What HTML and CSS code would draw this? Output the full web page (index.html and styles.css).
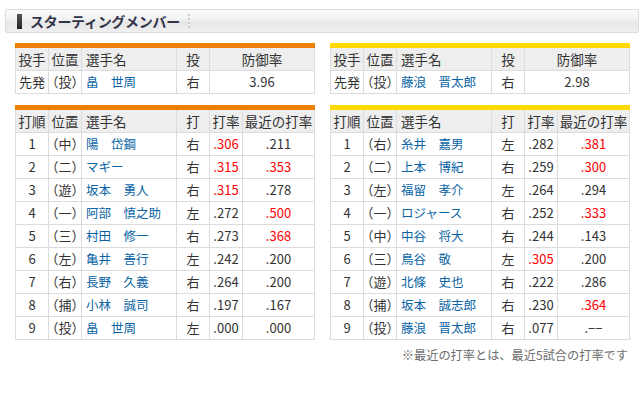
FILE: index.html
```html
<!DOCTYPE html>
<html lang="ja">
<head>
<meta charset="utf-8">
<link rel="stylesheet" href="styles.css">
</head>
<body>
<div class="titlebar"><span class="mark"></span><h2 class="title">スターティングメンバー</h2><span class="sep"></span></div>
<div class="cols">
  <div class="col">
    <table class="tbl orange pitch">
      <colgroup><col class="c1"><col class="c2"><col class="c3"><col class="c4"><col></colgroup>
      <tr class="head"><th>投手</th><th>位置</th><th class="l">選手名</th><th>投</th><th>防御率</th></tr>
      <tr><td>先発</td><td class="pos">（投）</td><td class="l"><a>畠　世周</a></td><td>右</td><td>3.96</td></tr>
    </table>
    <table class="tbl orange bat">
      <colgroup><col class="c1"><col class="c2"><col class="c3"><col class="c4"><col class="c5"><col></colgroup>
      <tr class="head"><th>打順</th><th>位置</th><th class="l">選手名</th><th>打</th><th>打率</th><th>最近の打率</th></tr>
      <tr><td>1</td><td class="pos">（中）</td><td class="l"><a>陽　岱鋼</a></td><td>右</td><td class="red">.306</td><td>.211</td></tr>
      <tr><td>2</td><td class="pos">（二）</td><td class="l"><a>マギー</a></td><td>右</td><td class="red">.315</td><td class="red">.353</td></tr>
      <tr><td>3</td><td class="pos">（遊）</td><td class="l"><a>坂本　勇人</a></td><td>右</td><td class="red">.315</td><td>.278</td></tr>
      <tr><td>4</td><td class="pos">（一）</td><td class="l"><a>阿部　慎之助</a></td><td>左</td><td>.272</td><td class="red">.500</td></tr>
      <tr><td>5</td><td class="pos">（三）</td><td class="l"><a>村田　修一</a></td><td>右</td><td>.273</td><td class="red">.368</td></tr>
      <tr><td>6</td><td class="pos">（左）</td><td class="l"><a>亀井　善行</a></td><td>左</td><td>.242</td><td>.200</td></tr>
      <tr><td>7</td><td class="pos">（右）</td><td class="l"><a>長野　久義</a></td><td>右</td><td>.264</td><td>.200</td></tr>
      <tr><td>8</td><td class="pos">（捕）</td><td class="l"><a>小林　誠司</a></td><td>右</td><td>.197</td><td>.167</td></tr>
      <tr><td>9</td><td class="pos">（投）</td><td class="l"><a>畠　世周</a></td><td>左</td><td>.000</td><td>.000</td></tr>
    </table>
  </div>
  <div class="col">
    <table class="tbl yellow pitch">
      <colgroup><col class="c1"><col class="c2"><col class="c3"><col class="c4"><col></colgroup>
      <tr class="head"><th>投手</th><th>位置</th><th class="l">選手名</th><th>投</th><th>防御率</th></tr>
      <tr><td>先発</td><td class="pos">（投）</td><td class="l"><a>藤浪　晋太郎</a></td><td>右</td><td>2.98</td></tr>
    </table>
    <table class="tbl yellow bat">
      <colgroup><col class="c1"><col class="c2"><col class="c3"><col class="c4"><col class="c5"><col></colgroup>
      <tr class="head"><th>打順</th><th>位置</th><th class="l">選手名</th><th>打</th><th>打率</th><th>最近の打率</th></tr>
      <tr><td>1</td><td class="pos">（右）</td><td class="l"><a>糸井　嘉男</a></td><td>左</td><td>.282</td><td class="red">.381</td></tr>
      <tr><td>2</td><td class="pos">（二）</td><td class="l"><a>上本　博紀</a></td><td>右</td><td>.259</td><td class="red">.300</td></tr>
      <tr><td>3</td><td class="pos">（左）</td><td class="l"><a>福留　孝介</a></td><td>左</td><td>.264</td><td>.294</td></tr>
      <tr><td>4</td><td class="pos">（一）</td><td class="l"><a>ロジャース</a></td><td>右</td><td>.252</td><td class="red">.333</td></tr>
      <tr><td>5</td><td class="pos">（中）</td><td class="l"><a>中谷　将大</a></td><td>右</td><td>.244</td><td>.143</td></tr>
      <tr><td>6</td><td class="pos">（三）</td><td class="l"><a>鳥谷　敬</a></td><td>左</td><td class="red">.305</td><td>.200</td></tr>
      <tr><td>7</td><td class="pos">（遊）</td><td class="l"><a>北條　史也</a></td><td>右</td><td>.222</td><td>.286</td></tr>
      <tr><td>8</td><td class="pos">（捕）</td><td class="l"><a>坂本　誠志郎</a></td><td>右</td><td>.230</td><td class="red">.364</td></tr>
      <tr><td>9</td><td class="pos">（投）</td><td class="l"><a>藤浪　晋太郎</a></td><td>右</td><td>.077</td><td>.−−</td></tr>
    </table>
    <p class="note">※最近の打率とは、最近5試合の打率です</p>
  </div>
</div>
</body>
</html>
```
FILE: styles.css
```css
html, body { margin: 0; padding: 0; background: #fff; }
body {
  font-family: "Noto Sans CJK JP", "Noto Sans", sans-serif;
  font-size: 13px;
  color: #333;
  padding: 9px 4px 0 5px;
}
.titlebar {
  display: flex;
  align-items: center;
  height: 22px;
  border: 1px solid #dcdcdc;
  border-radius: 2px;
  background: linear-gradient(#fbfbfb 0%, #f1f1f1 45%, #e6e6e6 55%, #efefef 100%);
  padding-left: 11px;
}
.mark { width: 5px; height: 15px; background: linear-gradient(#555, #222); margin-right: 8px; }
.title { margin: 0; font-size: 14px; font-weight: bold; color: #33334a; line-height: 22px; letter-spacing: -0.3px; }
.sep { width: 0; height: 14px; border-left: 2px dotted #ccc; margin-left: 8px; }
.cols { display: flex; gap: 15px; padding: 10px 0 0 10px; }
.col { width: 300px; }
.tbl {
  width: 300px;
  border-collapse: collapse;
  table-layout: fixed;
  margin-bottom: 11px;
}
.tbl.orange { border-top: 5px solid #ee7f00; }
.tbl.yellow { border-top: 5px solid #ffd900; }
.tbl.bat { margin-bottom: 0; }
.c1 { width: 33px; } .c2 { width: 33px; } .c3 { width: 95px; } .c4 { width: 33px; } .c5 { width: 33px; }
.tbl th, .tbl td {
  border: 1px solid #dcdcdc;
  height: 22px;
  padding: 0;
  text-align: center;
  font-weight: normal;
  line-height: 22px;
  white-space: nowrap;
  overflow: hidden;
}
.tbl .head th { background: #eeeeee; font-size: 13.5px; color: #333; }
.tbl .l { text-align: left; padding-left: 4px; }
.tbl td { font-size: 13px; }
.tbl td.pos { font-size: 13px; font-feature-settings: "halt"; }
.tbl a { color: #0a64a4; font-size: 12.5px; }
.red { color: #f00; }
.note { margin: 6px 0 0; text-align: right; color: #6e6e6e; font-size: 12.2px; line-height: 18px; padding-right: 2px; }
```
